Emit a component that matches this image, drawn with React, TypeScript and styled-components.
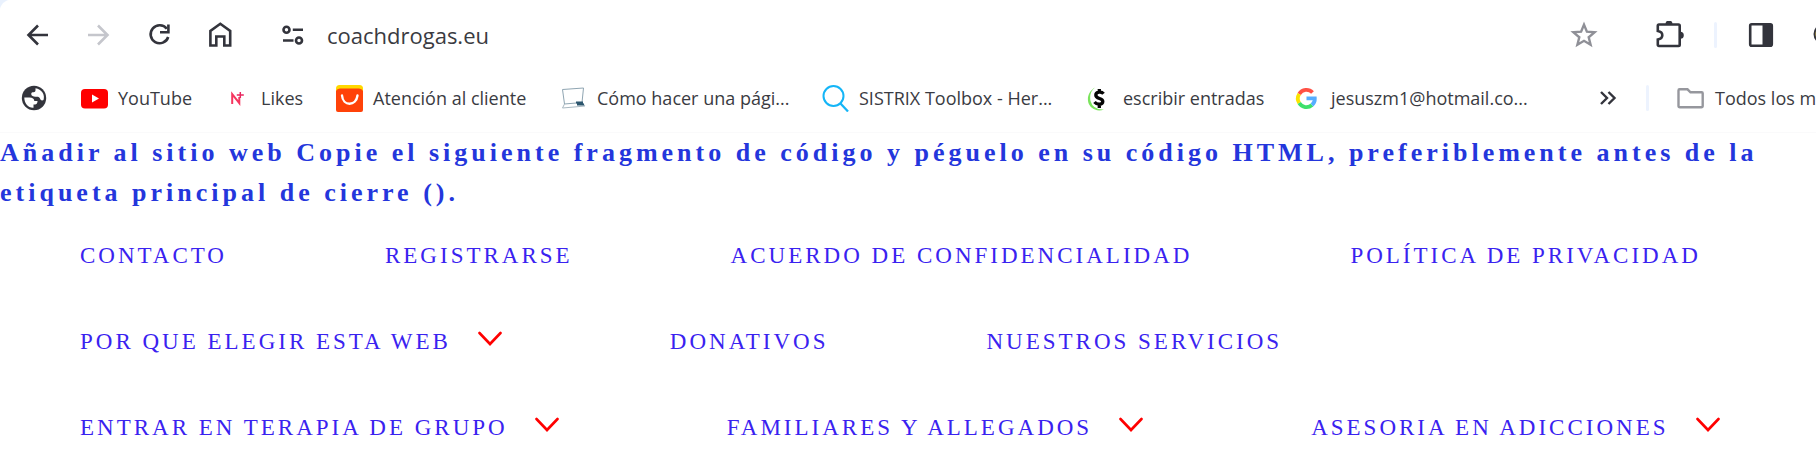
import React from "react";
import styled, { createGlobalStyle } from "styled-components";

const Global = createGlobalStyle`
  *, *::before, *::after { box-sizing: border-box; }
  body { margin: 0; background: #fff; overflow-x: hidden; }
`;

const UI_FONT = `"Open Sans", "Noto Sans", sans-serif`;

const Chrome = styled.header`
  border-bottom: 1px solid #fafafb;
  background: radial-gradient(circle at 12px 12px, #fff 12px, #e9f1fd 13px) 0 0 / 12px 12px no-repeat;
  font-family: ${UI_FONT};
  color: #3a3b42;
  overflow: hidden;
`;

const Toolbar = styled.div`
  display: flex;
  align-items: center;
  height: 70px;
  padding-left: 24px;
`;

const NavButtons = styled.nav`
  display: flex;
  gap: 33px;
`;

const IconButton = styled.button<{ $tone?: string }>`
  display: flex;
  flex: none;
  padding: 0;
  border: 0;
  background: none;
  color: ${(p) => p.$tone ?? "#33343c"};
`;

const Address = styled.form`
  display: flex;
  flex: 1;
  align-items: center;
  gap: 20px;
  min-width: 0;
  margin: 0 0 0 44px;
`;

const AddressInput = styled.input`
  flex: 1;
  min-width: 0;
  padding: 0;
  border: 0;
  outline: 0;
  background: none;
  color: #3a3b42;
  font: 22px/32px ${UI_FONT};
`;

const Divider = styled.span`
  flex: none;
  width: 3px;
  height: 26px;
  border-radius: 2px;
  background: #edf3fe;
`;

const Actions = styled.div`
  display: flex;
  align-items: center;
  gap: 30px;
  padding-left: 58px;
`;

const Profile = styled.div`
  width: 11px;
  padding-left: 8px;
  overflow: hidden;
`;

const Bookmarks = styled.nav`
  display: flex;
  align-items: center;
  height: 62px;
  padding: 0 0 6px 20px;
  font-size: 18px;
  line-height: 24px;
`;

const BookmarkList = styled.div`
  display: flex;
  flex: 1;
  gap: 35px;
  min-width: 0;
  margin-left: 33px;
  overflow: hidden;
`;

const Bookmark = styled.a<{ $width?: number }>`
  display: flex;
  flex: none;
  align-items: center;
  gap: 10px;
  width: ${(p) => (p.$width ? `${p.$width}px` : "auto")};
  color: inherit;
  text-decoration: none;
  white-space: nowrap;
  svg { flex: none; }
`;

const AllBookmarks = styled.div`
  display: flex;
  flex: none;
  align-items: center;
  gap: 28px;
  width: 220px;
  overflow: hidden;
`;

const FolderButton = styled(IconButton)`
  align-items: center;
  gap: 10px;
  color: #3a3b42;
  font: inherit;
  white-space: nowrap;
`;

const Page = styled.main`
  font-family: "Liberation Serif", serif;
`;

const Notice = styled.h1`
  margin: 0;
  color: #2436dc;
  font-size: 26px;
  line-height: 40px;
  letter-spacing: 4px;
`;

const Menu = styled.nav`
  display: flex;
  flex-wrap: wrap;
`;

const MenuItem = styled.div`
  display: flex;
  align-items: center;
  gap: 22px;
  height: 86px;
  padding: 0 78px 0 80px;
`;

const MenuLink = styled.a`
  color: #3a22f0;
  font-size: 23px;
  line-height: 32px;
  letter-spacing: 3px;
  text-decoration: none;
  text-transform: uppercase;
`;

const Expand = styled(IconButton)`
  padding: 0 10px 6px 5px;
`;

type GlyphProps = { size?: number; children: React.ReactNode };
const Glyph = ({ size = 28, children }: GlyphProps) => (
  <svg width={size} height={size} viewBox={`0 0 ${size} ${size}`} fill="none" stroke="currentColor" strokeWidth="2.6" aria-hidden="true">
    {children}
  </svg>
);

const bookmarks: { label: string; width?: number; icon: React.ReactNode }[] = [
  {
    label: "YouTube",
    width: 108,
    icon: (
      <Glyph size={27}>
        <rect x="0" y="4" width="27" height="19.5" rx="4" fill="#f00" stroke="none" />
        <path d="M11 9.6v8l7-4z" fill="#fff" stroke="none" />
      </Glyph>
    ),
  },
  {
    label: "Likes",
    width: 77,
    icon: (
      <Glyph size={27}>
        <path d="M8.2 19V9.2L15.3 18.2V12" stroke="#f5365f" strokeWidth="2" />
        <path d="M12.8 10h7M16.3 7v6" stroke="#e8265f" strokeWidth="1.5" />
      </Glyph>
    ),
  },
  {
    label: "Atención al cliente",
    width: 189,
    icon: (
      <Glyph size={27}>
        <path d="M0 8V3.500Q0 0 3.500 0h20Q27 0 27 3.500V8z" fill="#ffd800" stroke="none" />
        <path d="M0 6Q1 3.500 4 3.500h19Q26 3.500 27 6v19q0 2-2 2H2q-2 0-2-2z" fill="#ff4209" stroke="none" />
        <path d="M6 10.500c1 11 14 11 15.500 0" stroke="#fff" strokeWidth="2.400" strokeLinecap="round" />
      </Glyph>
    ),
  },
  {
    label: "Cómo hacer una pági...",
    width: 227,
    icon: (
      <Glyph size={27}>
        <path d="M2.500 4.500 23.500 3 22 17.500 4.500 19z" stroke="#8fa5b2" strokeWidth="1" />
        <path d="M4.500 19 2.500 23 14 22l11-1-3-3.500" stroke="#a9b8c1" strokeWidth="1" />
        <path d="M16 17.500h7M17 19.500h7" stroke="#2d566e" strokeWidth="2" />
      </Glyph>
    ),
  },
  {
    label: "SISTRIX Toolbox - Her...",
    width: 229,
    icon: (
      <Glyph size={27}>
        <circle cx="11.500" cy="11" r="10" stroke="#14b5f7" strokeWidth="2" />
        <path d="m18.500 18.500 7.500 8" stroke="#14b5f7" strokeWidth="2.200" />
      </Glyph>
    ),
  },
  {
    label: "escribir entradas",
    width: 173,
    icon: (
      <Glyph size={27}>
        <path d="M9 2.500C-.5 8-.5 21 9 24.500q4 2 9 0Q7 25 4.500 16 3 7 9 2.500z" fill="#7be45c" stroke="none" />
        <path d="M17.500 8.800C15.500 6 9.800 6.500 9.800 10c0 4.500 7 2.500 7 6.500 0 3.200-5.800 3.600-8.300.5M13.300 4v4M13.300 19v4" stroke="#050505" strokeWidth="3.300" />
      </Glyph>
    ),
  },
  {
    label: "jesuszm1@hotmail.co...",
    width: 230,
    icon: (
      <Glyph size={27}>
        <g strokeWidth="3.800">
          <path d="M5.200 9A8.400 8.400 0 0 1 18.500 7.500" stroke="#ff5145" />
          <path d="M5.200 9a8.400 8.400 0 0 0 0 9" stroke="#fbe400" />
          <path d="M5.200 18a8.400 8.400 0 0 0 12.800 2" stroke="#3de06b" />
          <path d="M18 20a8 8 0 0 0 2.800-6.600H12.500" stroke="#56adff" />
        </g>
      </Glyph>
    ),
  },
];

const menu: { label: string; expandable?: boolean }[] = [
  { label: "Contacto" },
  { label: "Registrarse" },
  { label: "Acuerdo de confidencialidad" },
  { label: "Política de privacidad" },
  { label: "Por que elegir esta web", expandable: true },
  { label: "Donativos" },
  { label: "Nuestros servicios" },
  { label: "Entrar en terapia de grupo", expandable: true },
  { label: "Familiares y allegados", expandable: true },
  { label: "Asesoria en adicciones", expandable: true },
];

export default function App() {
  return (
    <>
      <Global />
      <Chrome>
        <Toolbar>
          <NavButtons aria-label="Navegación">
            <IconButton aria-label="Atrás">
              <Glyph><path d="M24 14H5M14 4.500 4.500 14l9.500 9.500" /></Glyph>
            </IconButton>
            <IconButton aria-label="Adelante" $tone="#c5c6cc">
              <Glyph><path d="M3 14h19M13 4.500l9.500 9.500L13 23.500" /></Glyph>
            </IconButton>
            <IconButton aria-label="Recargar">
              <Glyph>
                <path d="M20.800 7.800A9 9 0 1 0 22.200 16" />
                <path d="M22.400 3.500v7.700h-8.400" />
              </Glyph>
            </IconButton>
            <IconButton aria-label="Inicio">
              <Glyph><path d="M3.400 24.500V10L13.300 2.800 23.200 10v14.500H17.300v-9h-8v9z" /></Glyph>
            </IconButton>
          </NavButtons>
          <Address onSubmit={(e) => e.preventDefault()}>
            <IconButton type="button" aria-label="Información del sitio">
              <Glyph>
                <circle cx="7.500" cy="8.700" r="3" />
                <path d="M13.800 8.700H24M4 19.500h10.500" />
                <circle cx="20" cy="19.500" r="3" />
              </Glyph>
            </IconButton>
            <AddressInput aria-label="Dirección" defaultValue="coachdrogas.eu" />
            <IconButton type="button" aria-label="Añadir a marcadores" $tone="#8f9097">
              <Glyph>
                <path strokeWidth="2.400" d="m14 3.600 2.900 7.100 7.700.6-5.900 5 1.900 7.500L14 19.800l-6.600 4 1.900-7.500-5.900-5 7.700-.6z" />
              </Glyph>
            </IconButton>
          </Address>
          <Actions>
            <IconButton aria-label="Extensiones">
              <Glyph>
                <path d="M3 3.500h19.500q1.200 0 1.200 1.200v19.100q0 1.200-1.200 1.200H3q-1.200 0-1.200-1.200v-5.300q4.500-.8 4.500-4.300T1.800 10V4.700Q1.800 3.500 3 3.500z" />
                <path d="M9.500 3a3.500 3.500 0 0 1 7 0zM24.300 10.800a3.500 3.500 0 0 1 0 7z" fill="currentColor" stroke="none" />
              </Glyph>
            </IconButton>
            <Divider />
            <IconButton aria-label="Panel lateral">
              <Glyph>
                <rect x="3.200" y="3.200" width="21.600" height="21.600" rx="1.500" />
                <path d="M15.500 3h9v22h-9z" fill="currentColor" stroke="none" />
              </Glyph>
            </IconButton>
            <Profile>
              <IconButton aria-label="Perfil">
                <Glyph>
                  <circle cx="11" cy="13" r="9.500" fill="#e6c34d" strokeWidth="2" />
                </Glyph>
              </IconButton>
            </Profile>
          </Actions>
        </Toolbar>
        <Bookmarks aria-label="Marcadores">
          <IconButton aria-label="Web">
            <Glyph>
              <circle cx="14" cy="14" r="12.200" fill="currentColor" stroke="none" />
              <path d="M15.500 4.300c3 .3 5.500 2 7 4.300 1.500 2.500 1.800 5 1 7.400-1.500 1-3 .3-3.500-1.500-.6-1.800-2-2-4.200-1.800-2.300.1-4.600-.9-4.600-2.700 0-1.500 1-1.800 2.400-1.800 1.200 0 1.900-.6 1.900-1.900zM4.300 13.500h5.200c3 0 4.800 1.200 4.800 3.500h3.200c0 3-1.500 3.500-4 3.500v3.200C8.200 24 4.300 19.500 4.300 13.500z" fill="#fff" stroke="none" />
            </Glyph>
          </IconButton>
          <BookmarkList>
            {bookmarks.map((b) => (
              <Bookmark key={b.label} href="#" $width={b.width}>
                {b.icon}
                {b.label}
              </Bookmark>
            ))}
          </BookmarkList>
          <AllBookmarks>
            <IconButton aria-label="Más marcadores">
              <Glyph size={22}><path d="m5 5 6 6-6 6M12.500 5l6 6-6 6" strokeWidth="2.400" /></Glyph>
            </IconButton>
            <Divider />
            <FolderButton>
              <Glyph>
                <path d="M2.500 5.300h8l3 3h11.200q1 0 1 1v12.500q0 1.400-1.400 1.400H3q-1.500 0-1.500-1.400V6.500q0-1.200 1-1.200z" stroke="#96979d" strokeWidth="2.400" />
              </Glyph>
              Todos los marcadores
            </FolderButton>
          </AllBookmarks>
        </Bookmarks>
      </Chrome>
      <Page>
        <Notice>
          Añadir al sitio web Copie el siguiente fragmento de código y péguelo en su código HTML,
          preferiblemente antes de la etiqueta principal de cierre ().
        </Notice>
        <Menu aria-label="Principal">
          {menu.map((m) => (
            <MenuItem key={m.label}>
              <MenuLink href="#">{m.label}</MenuLink>
              {m.expandable && (
                <Expand aria-label={`Abrir ${m.label}`} $tone="#ff0000">
                  <svg width="24" height="16" viewBox="0 0 24 16" fill="none" stroke="currentColor" strokeWidth="2.600" strokeLinecap="round" aria-hidden="true">
                    <path d="m1.500 2 10.500 11L22.500 2" />
                  </svg>
                </Expand>
              )}
            </MenuItem>
          ))}
        </Menu>
      </Page>
    </>
  );
}
